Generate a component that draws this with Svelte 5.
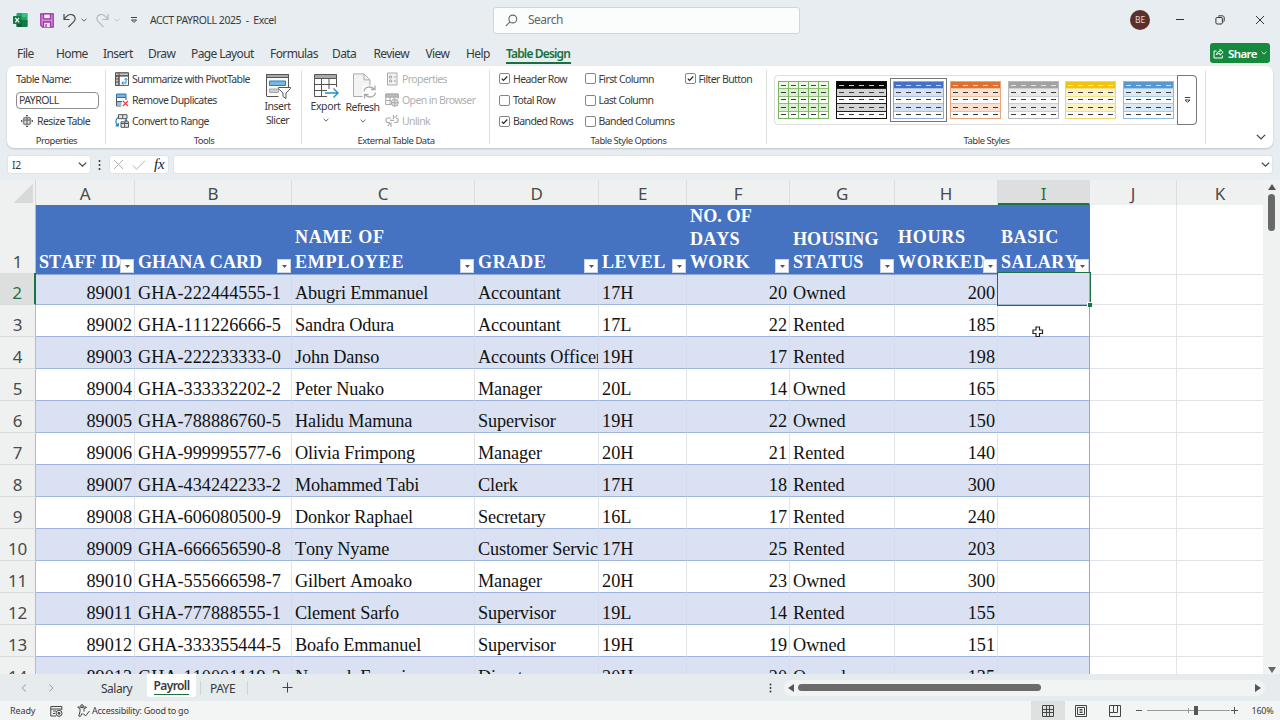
<script>
  const tabs = [
    ['File', 17], ['Home', 56], ['Insert', 103], ['Draw', 148], ['Page Layout', 191],
    ['Formulas', 270], ['Data', 332], ['Review', 373.5], ['View', 425.5], ['Help', 466]
  ];
  const columns = [
    { id: 'A', w: 99, lines: ['STAFF ID'], lh: 24, ls: 0 },
    { id: 'B', w: 157, lines: ['GHANA CARD'], lh: 24, ls: 0 },
    { id: 'C', w: 183, lines: ['NAME OF', 'EMPLOYEE'], lh: 24.5, ls: 0.7 },
    { id: 'D', w: 124, lines: ['GRADE'], lh: 24, ls: 0.6 },
    { id: 'E', w: 88, lines: ['LEVEL'], lh: 24, ls: 0.5 },
    { id: 'F', w: 103, lines: ['NO. OF', 'DAYS', 'WORK'], lh: 23, ls: 0.1 },
    { id: 'G', w: 105, lines: ['HOUSING', 'STATUS'], lh: 23, ls: 0 },
    { id: 'H', w: 103, lines: ['HOURS', 'WORKED'], lh: 24.5, ls: 0.7 },
    { id: 'I', w: 92, lines: ['BASIC', 'SALARY'], lh: 24.5, ls: 0.5 },
    { id: 'J', w: 87 },
    { id: 'K', w: 87 }
  ];
  const template = columns.map((c) => c.w + 'px').join(' ');
  const rows = [
    ['89001', 'GHA-222444555-1', 'Abugri Emmanuel', 'Accountant', '17H', '20', 'Owned', '200'],
    ['89002', 'GHA-111226666-5', 'Sandra Odura', 'Accountant', '17L', '22', 'Rented', '185'],
    ['89003', 'GHA-222233333-0', 'John Danso', 'Accounts Officer', '19H', '17', 'Rented', '198'],
    ['89004', 'GHA-333332202-2', 'Peter Nuako', 'Manager', '20L', '14', 'Owned', '165'],
    ['89005', 'GHA-788886760-5', 'Halidu Mamuna', 'Supervisor', '19H', '22', 'Owned', '150'],
    ['89006', 'GHA-999995577-6', 'Olivia Frimpong', 'Manager', '20H', '21', 'Rented', '140'],
    ['89007', 'GHA-434242233-2', 'Mohammed Tabi', 'Clerk', '17H', '18', 'Rented', '300'],
    ['89008', 'GHA-606080500-9', 'Donkor Raphael', 'Secretary', '16L', '17', 'Rented', '240'],
    ['89009', 'GHA-666656590-8', 'Tony Nyame', 'Customer Service', '17H', '25', 'Rented', '203'],
    ['89010', 'GHA-555666598-7', 'Gilbert Amoako', 'Manager', '20H', '23', 'Owned', '300'],
    ['89011', 'GHA-777888555-1', 'Clement Sarfo', 'Supervisor', '19L', '14', 'Rented', '155'],
    ['89012', 'GHA-333355444-5', 'Boafo Emmanuel', 'Supervisor', '19H', '19', 'Owned', '151'],
    ['89013', 'GHA-110001119-2', 'Nyamah Francis', 'Director', '20H', '20', 'Owned', '135']
  ];
  const options = [
    ['Header Row', true], ['First Column', false], ['Filter Button', true],
    ['Total Row', false], ['Last Column', false], null,
    ['Banded Rows', true], ['Banded Columns', false]
  ];
  const styles = [
    { line: '#8fbf78', head: '#eef8e8', dash: '#444', band: '#dcefd2', edge: '#7bb661', grid: true },
    { line: '#222', head: '#000', dash: '#ccc', band: '#d4d4d4', edge: '#111' },
    { line: '#a9c0e6', head: '#4472c4', dash: '#c4d8ff', band: '#d6e2f4', edge: '#8eaadb', on: true },
    { line: '#f0bfa0', head: '#dd7230', dash: '#ffd5b8', band: '#fbe0d2', edge: '#e8a57c' },
    { line: '#cfcfcf', head: '#a3a3a3', dash: '#e4e4e4', band: '#e9e9e9', edge: '#b9b9b9' },
    { line: '#f5e08a', head: '#f2c40c', dash: '#fff0a8', band: '#fdf2c6', edge: '#efd668' },
    { line: '#a8cbe8', head: '#5598d2', dash: '#c5e3ff', band: '#d9e9f6', edge: '#8fbbe0' }
  ];
</script>

{#snippet chevron(size = 8, color = '#444')}
  <svg class="chev" width={size} height={size} viewBox="0 0 8 8" fill="none" stroke={color} stroke-width="1.1"><path d="M.7 2.3 4 5.5 7.3 2.3" /></svg>
{/snippet}

<div class="app">
  <header class="title">
    <svg class="xl" width="15" height="14" viewBox="0 0 15 14">
      <rect x="3.5" y="0" width="11" height="14" rx="1.2" fill="#21a366" /><path d="M9 0h4.300A1.200 1.200 0 0 1 14.500 1.200V4H9z" fill="#33c481" /><path d="M9 7h5.500v5.800a1.200 1.200 0 0 1-1.200 1.200H9z" fill="#107c41" /><path d="M3.500 7H9v7H4.700a1.200 1.200 0 0 1-1.200-1.200z" fill="#185c37" />
      <rect x="0" y="3" width="8.400" height="8" rx=".8" fill="#107c41" /><path d="m2.300 4.800 3.800 4.500m0-4.500L2.300 9.300" stroke="#fff" stroke-width="1.200" />
    </svg>
    <svg class="save" width="14" height="15" viewBox="0 0 14 15" fill="none" stroke="#9b35a4" stroke-width="1.300"><path d="M.8.900h12.400v13.200H2.600L.8 12.300z" fill="#d98be0" /><path d="M3.500.900h7v5h-7z" fill="#f4ecf5" /><path d="M3.500 14V9h7v5M6 11v3" fill="#f4ecf5" /></svg>
    <svg class="undo" width="14" height="15" viewBox="0 0 14 15" fill="none" stroke="#4a4a4a" stroke-width="1.200"><path d="M1 1v5.500h5.500M1.200 6.300C3.500 2.800 6.500 1 9 1.700c3.500.9 4 4.600 1.800 7L5.500 14" /></svg>
    <span class="c1">{@render chevron(6)}</span>
    <svg class="redo" width="14" height="15" viewBox="0 0 14 15" fill="none" stroke="#b5babd" stroke-width="1.200"><path d="M13 1v5.500H7.500M12.800 6.300C10.500 2.800 7.500 1 5 1.700 1.500 2.600 1 6.300 3.200 8.700L8.500 14" /></svg>
    <span class="c2">{@render chevron(6, '#bbb')}</span>
    <svg class="qat" width="8" height="8" viewBox="0 0 8 8" fill="none" stroke="#444"><path d="M1 1.500h6M1.500 4 4 6.500 6.500 4z" /></svg>
    <span class="doc">ACCT PAYROLL 2025&nbsp; -&nbsp; Excel</span>
    <div class="search">
      <svg width="13" height="13" viewBox="0 0 13 13" fill="none" stroke="#666" stroke-width="1.100"><circle cx="7.800" cy="5" r="3.900" /><path d="M5 7.800.8 12.200" /></svg>
      <span>Search</span>
    </div>
    <div class="avatar">BE</div>
    <div class="winctl">
      <svg width="10" height="10" viewBox="0 0 10 10" stroke="#333"><path d="M1 4.500h8" /></svg>
      <svg width="10" height="10" viewBox="0 0 10 10" stroke="#333" fill="none"><rect x=".9" y="2.500" width="6.500" height="6.500" rx="1.300" /><path d="M3 1.500C3.500.8 4 .8 5 .8h2.200c1.200 0 2 .8 2 2V5c0 1 0 1.500-.8 2" /></svg>
      <svg width="10" height="10" viewBox="0 0 10 10" stroke="#333"><path d="m1 1 8 8M9 1 1 9" /></svg>
    </div>
  </header>

  <nav class="tabs">
    {#each tabs as [name, x], i}
      <span class="tab" style:width="{(i < tabs.length - 1 ? tabs[i + 1][1] : 506) - x}px">{name}</span>
    {/each}
    <span class="tab active">Table Design</span>
    <button class="share">
      <svg width="11" height="11" viewBox="0 0 11 11" fill="none" stroke="#fff"><path d="M3.500 3H1v7h8.300V7.500M3.300 7C3.500 4.500 5 3.500 7 3.500V1.300l3 3-3 2.900V5.400C5.500 5.400 4.300 5.700 3.300 7z" /></svg>
      <span>Share</span>{@render chevron(6, '#fff')}
    </button>
  </nav>

  <section class="ribbon">
    <div class="group props">
      <div class="body">
        <div class="line">Table Name:</div>
        <div class="line"><div class="input">PAYROLL</div></div>
        <div class="line indent">
          <svg width="12" height="12" viewBox="0 0 13 13" fill="none" stroke="#555"><path d="M3 3h7v7H3z" fill="#ddd" /><path d="M3 5.500h7M6.500 3v7M6.500 0v2M6.500 11v2M0 6.500h2M11 6.500h2M5.200 1.300 6.500 0l1.300 1.300M5.200 11.700 6.500 13l1.300-1.300M1.300 5.200 0 6.500l1.300 1.300M11.700 5.200 13 6.500l-1.300 1.300" /></svg>
          Resize Table
        </div>
      </div>
      <div class="label">Properties</div>
    </div>

    <div class="group tools">
      <div class="body cols">
        <div class="stack">
          <div class="line wide">
            <svg width="14" height="14" viewBox="0 0 14 14" fill="none" stroke="#555"><path d="M.5.900h13v12.500H.5z" fill="#fff" /><path d="M.5.900h13v3H.5zM.5 3.900H4v9.500H.5z" fill="#c5c5c5" /><path d="M4 .9v12.500M.5 3.900h13M.5 7H4m-3.500 3H4" /><path d="M7 11h4V6.500M8.300 9.500 6.800 11l1.500 1.600M9.500 7.700 11 6.200l1.500 1.500" stroke="#2183c4" /></svg>
            Summarize with PivotTable
          </div>
          <div class="line">
            <svg width="14" height="14" viewBox="0 0 14 14" fill="none" stroke="#2878b8"><path d="M1.500 1h9.500v3.500H1.500z" fill="#73b5e8" /><path d="M1.500 4.500V13H6M11 4.500V7M1.500 8.500H7" stroke="#555" /><path d="M2 9h4.500v3.500H2z" fill="#8cc4ee" stroke="none" /><path d="m8 8 5 5m0-5-5 5" stroke="#e0444a" stroke-width="1.200" /></svg>
            Remove Duplicates
          </div>
          <div class="line">
            <svg width="14" height="14" viewBox="0 0 14 14" fill="none" stroke="#555"><path d="M3.500.700h8.500v4H3.500zM7.700.700v4" fill="#e5e5e5" /><path d="M6 9.500h7.500v3.800H6zM9.700 8v5.300M6 9.500V7.800h7.500v1.700" fill="#e5e5e5" /><path d="M3 3.500C.3 5.500.2 9 2.700 11.500M.5 11.800h2.800V8.900M11 5v2M9.800 6 11 7.200 12.200 6" stroke="#2183c4" stroke-width="1.200" /></svg>
            Convert to Range
          </div>
        </div>
        <div class="big slicer">
          <svg width="26" height="26" viewBox="0 0 26 26" fill="none" stroke="#555"><path d="M1.500 23V1.500h22V14M1.500 23.500h12" fill="#fafafa" /><path d="M1.500 1.500h22v3h-22z" fill="#a9a9a9" /><path d="M4.500 8h16v4.500h-16z" fill="#73b8ea" stroke="#2b7fbe" /><path d="M4.500 16h9v3.500h-9z" fill="#ccc" stroke="#aaa" /><path d="M13.500 14.500h12v1.200L21 20v5.500l-3-2V20l-4.500-4.300z" fill="#fff" /></svg>
          <span>Insert<br />Slicer</span>
        </div>
      </div>
      <div class="label">Tools</div>
    </div>

    <div class="group ext">
      <div class="body cols">
        <div class="big exp">
          <svg width="26" height="26" viewBox="0 0 26 26" fill="none" stroke="#555"><path d="M1 1h23v23H1z" fill="#fff" stroke="none" /><path d="M1.500 1.500h22v4h-22z" fill="#a9a9a9" /><path d="M23.500 5.500V14M1.500 5.500v18H14M1.500 11.500h22M1.500 17.500H14M8.500 5.500v18M16 5.500V16" /><path d="M12 20h13m-4.500-4.500L25 20l-4.500 4.500" stroke="#2590c8" stroke-width="1.400" /></svg>
          <span>Export</span>{@render chevron(6)}
        </div>
        <div class="big ref">
          <svg width="26" height="26" viewBox="0 0 26 26" fill="none" stroke="#ababab"><path d="M2.500.900h10.500l6 6V23.500H2.500z" fill="#f3f3f3" /><path d="M13 .9v6h6" /><path d="M11.500 12.500h14v13h-14z" fill="#fff" stroke="none" /><path d="M13 18.500c.5-5 7.500-6 10.500-2M24 12.500v4h-4M24.500 19.500c-.5 5-7.500 6-10.500 2M13.500 25.500v-4h4" stroke-width="1.300" /></svg>
          <span>Refresh</span>{@render chevron(6)}
        </div>
        <div class="stack off">
          <div class="line"><svg width="14" height="14" viewBox="0 0 14 14" fill="none" stroke="#aaa"><path d="M2.500 1h9.500v12H2.500z" fill="#f3f3f3" /><path d="M4.500 4h2v2h-2zM4.500 8h2v2h-2zM8.500 5H11M8.500 9H11" /></svg>Properties</div>
          <div class="line"><svg width="14" height="14" viewBox="0 0 14 14" fill="none" stroke="#aaa"><path d="M.7 1h12.500v5M.7 1v10.500H6M.7 4h12.500M.7 7.500H6M5 4v7.500M9 4v2" /><path d="M.7 1h12.500v3H.7z" fill="#bbb" /><circle cx="9.800" cy="9.700" r="3.600" fill="#ddd" /><path d="M6.200 9.700h7.200M9.800 6v7.300" /></svg>Open in Browser</div>
          <div class="line"><svg width="14" height="14" viewBox="0 0 14 14" fill="none" stroke="#aaa" stroke-width="1.200"><path d="M6 4H3C.3 4 .2 8.500 3 8.500h2M8 4.500 9.500 3M9 8.500h1.500c3.500 0 3.500-4.500.5-4.500M5 8.500 3 12m3-3.500V13M8.500 1v2.500M12 1 10.500 3.500M5 6.300h4" /></svg>Unlink</div>
        </div>
      </div>
      <div class="label">External Table Data</div>
    </div>

    <div class="group opts">
      <div class="body checks">
        {#each options as o}
          <div class="line">
            {#if o}
              <i class="box">{#if o[1]}<svg width="7" height="7" viewBox="0 0 7 7" fill="none" stroke="#222" stroke-width="1.100"><path d="m.8 3.700 1.700 1.800L6.300 1.500" /></svg>{/if}</i>{o[0]}
            {/if}
          </div>
        {/each}
      </div>
      <div class="label">Table Style Options</div>
    </div>

    <div class="group gallery">
      <div class="body">
        <div class="strip">
          {#each styles as s}
            <div class="cell" class:on={s.on}>
              <svg width="51" height="38" viewBox="0 0 51 38">
                <rect width="51" height="38" fill="#fff" />
                <rect width="51" height="8" fill={s.head} />
                <rect y="8" width="51" height="7.300" fill={s.band} /><rect y="22.500" width="51" height="7.500" fill={s.band} />
                {#each [7.5, 15.5, 22.5, 30.5] as y}<path d="M0 {y}H51" stroke={s.line} stroke-width="1" />{/each}
                {#if s.grid}<path d="M10.500 0v38M20.500 0v38M30.500 0v38M40.500 0v38" stroke={s.edge} />{/if}
                {#each [4.5, 11.5, 18.500, 26.5, 33.500] as y, i}<path d="M3 {y}h5m5 0h5m5 0h5m5 0h5m5 0h5" stroke={i ? '#3b3b3b' : s.dash} stroke-width="1.200" />{/each}
                <rect x=".5" y=".5" width="50" height="37" fill="none" stroke={s.edge} />
              </svg>
            </div>
          {/each}
          <div class="more"><svg width="7" height="8" viewBox="0 0 7 8" fill="none" stroke="#444"><path d="M.8 1.500h5.400M1 4l2.500 2.300L6 4z" /></svg></div>
        </div>
      </div>
      <div class="label">Table Styles</div>
    </div>
    <div class="collapse">{@render chevron(10)}</div>
  </section>

  <section class="formula">
    <div class="namebox"><span>I2</span>{@render chevron(9)}</div>
    <svg class="dots" width="3" height="12" viewBox="0 0 3 12" fill="#333"><circle cx="1.500" cy="2" r="1" /><circle cx="1.500" cy="6" r="1" /><circle cx="1.500" cy="10" r="1" /></svg>
    <div class="fx">
      <svg width="11" height="11" viewBox="0 0 11 11" stroke="#b4b4b4"><path d="m1 1 9 9M10 1l-9 9" /></svg>
      <svg width="14" height="10" viewBox="0 0 14 10" stroke="#b4b4b4" fill="none"><path d="m.8 5.500 3.800 3.700L13 .8" /></svg>
      <span>fx</span>
    </div>
    <div class="finput">{@render chevron(9)}</div>
  </section>

  <main>
    <div class="sheet">
      <div class="rowline colhead" style:grid-template-columns="36px {template}">
        <div class="corner"></div>
        {#each columns as c}<div class="ch" class:sel={c.id === 'I'}>{c.id}</div>{/each}
      </div>
      <div class="rowline first" style:grid-template-columns="36px {template}">
        <div class="rh">1</div>
        {#each columns as c}
          {#if c.lines}
            <div class="th" style:line-height="{c.lh}px" style:letter-spacing="{c.ls}px">
              <div>{#each c.lines as l}<p>{l}</p>{/each}</div>
              <i class="filter"><svg width="5" height="3" viewBox="0 0 5 3"><path d="M0 0h5L2.500 3z" fill="#555" /></svg></i>
            </div>
          {:else}<div class="blank"></div>{/if}
        {/each}
      </div>
      {#each rows as r, n}
        <div class="rowline data" class:band={n % 2 === 0} style:grid-template-columns="36px {template}">
          <div class="rh" class:sel={n === 0}>{n + 2}</div>
          {#each columns as c, k}
            <div class="td" class:intable={k < 9} class:last={k === 8} class:name={k === 2} class:grade={k === 3} class:num={k === 0 || k === 5 || k === 7} class:cursor={n === 0 && k === 8}>{#if r[k]}<span>{r[k]}</span>{/if}</div>
          {/each}
        </div>
      {/each}
    </div>
    <div class="vscroll">
      <svg width="8" height="6" viewBox="0 0 8 6"><path d="M4 0 8 6H0z" fill="#555" /></svg>
      <i></i>
      <svg class="down" width="8" height="6" viewBox="0 0 8 6"><path d="M4 6 8 0H0z" fill="#666" /></svg>
    </div>
    <svg class="pointer" width="12" height="12" viewBox="0 0 12 12" fill="#fff" stroke="#222" stroke-width="1.200"><path d="M4 1h3.500v3h3v3.500h-3v3H4v-3H1V4h3z" /></svg>
  </main>

  <footer class="sheets">
    <svg class="pv" width="6" height="8" viewBox="0 0 6 8" fill="none" stroke="#999"><path d="M4.800.500 1 4l3.800 3.500" /></svg>
    <svg class="nx" width="6" height="8" viewBox="0 0 6 8" fill="none" stroke="#999"><path d="M1.200.500 5 4 1.200 7.500" /></svg>
    <span class="st salary">Salary</span>
    <span class="st current"><b>Payroll</b></span>
    <span class="st paye">PAYE</span>
    <svg class="plus" width="11" height="11" viewBox="0 0 11 11" stroke="#444"><path d="M5.500.500v10M.5 5.500h10" /></svg>
    <svg class="hd" width="3" height="10" viewBox="0 0 3 10" fill="#333"><circle cx="1.500" cy="1.500" r=".9" /><circle cx="1.500" cy="5" r=".9" /><circle cx="1.500" cy="8.500" r=".9" /></svg>
    <div class="hscroll">
      <svg width="6" height="8" viewBox="0 0 6 8"><path d="M0 4 6 0v8z" fill="#555" /></svg><i></i>
      <svg class="r" width="6" height="8" viewBox="0 0 6 8"><path d="M6 4 0 0v8z" fill="#555" /></svg>
    </div>
  </footer>

  <footer class="status">
    <span class="ready">Ready</span>
    <svg class="mac" width="13" height="12" viewBox="0 0 13 12" fill="none" stroke="#444"><path d="M6 11H.8V1.500h11V5M.8 4h11M3 6h3M3 8.500h2" /><circle cx="9" cy="8.300" r="3" /><circle cx="9" cy="8.300" r="1" fill="#444" /></svg>
    <svg class="acc" width="13" height="13" viewBox="0 0 13 13" fill="none" stroke="#444"><circle cx="5" cy="2" r="1.300" /><path d="M.8 3.500 3 4.500v3L1.800 12l1.500.5L5 9.500l1 1M9.500 3.500 7 4.500v3M.8 3.500C.8 2.500 2 2.700 5 3.800 8 2.700 9.500 2.500 9.500 3.500M6.500 9.700l2 2.300 4-5" /></svg>
    <span class="access">Accessibility: Good to go</span>
    <div class="views">
      <div class="v on"><svg width="12" height="12" viewBox="0 0 12 12" fill="none" stroke="#444"><path d="M.5.500h11v11H.5zM.5 4.500h11M.5 7.500h11M4.500.500v11M7.500.500v11" /></svg></div>
      <div class="v"><svg width="12" height="12" viewBox="0 0 12 12" fill="none" stroke="#444"><path d="M.5.500h11v11H.5zM2.500 2.500h7v7h-7zM4.500 4.500h3M4.500 6h3M4.500 7.500h3" /></svg></div>
      <div class="v"><svg width="12" height="12" viewBox="0 0 12 12" fill="none" stroke="#444"><path d="M.5.500h11v11H.5zM4.500.500v7h4v-7M.5 7.500h4" /></svg></div>
    </div>
    <svg class="zoomer" width="102" height="11" viewBox="0 0 102 11" stroke="#555"><path d="M0 5.500h6M95 5.500h7M98.500 2v7" /><path d="M11 5.500h83M52.500 3v5" stroke="#999" /><rect x="58.500" y="1.500" width="3" height="8" fill="#555" /></svg>
    <span class="pct">160%</span>
  </footer>
</div>

<style>
  :global(body) { margin: 0; overflow: hidden; }
  .app { width: 1280px; height: 720px; display: flex; flex-direction: column; background: #e7edf0; color: #3a3a3a; font: 10.500px/14px "Noto Sans", "Open Sans", sans-serif; letter-spacing: -.25px; overflow: hidden; }
  .app * { box-sizing: border-box; }
  svg { display: block; flex: none; }
  i { font-style: normal; }
  p { margin: 0; }

  .title { height: 40px; display: flex; align-items: center; padding-left: 13px; flex: none; }
  .save { margin-left: 12px; }
  .undo { margin-left: 9px; }
  .c1 { margin-left: 4px; }
  .redo { margin-left: 8px; }
  .c2 { margin-left: 5px; }
  .qat { margin-left: 10px; }
  .doc { margin-left: 12px; width: 343px; white-space: nowrap; letter-spacing: -.43px; }
  .search { width: 307px; height: 27px; background: #fbfcfc; border: 1px solid #cfd5d8; border-radius: 3px; display: flex; align-items: center; gap: 10px; padding-left: 11px; font-size: 12px; letter-spacing: -.5px; color: #666; }
  .avatar { margin-left: 330px; width: 20px; height: 20px; border-radius: 50%; background: #5b2f2a; color: #e5d8d6; display: grid; place-items: center; font-size: 8.500px; }
  .winctl { margin-left: 25px; display: flex; gap: 30px; }

  .tabs { height: 26px; display: flex; align-items: center; padding: 1px 0 0 17px; flex: none; font-size: 12px; letter-spacing: -.6px; }
  .tab { white-space: nowrap; flex: none; }
  .tab.active { width: 64.500px; color: #18713c; font-weight: 600; letter-spacing: -.85px; height: 18px; line-height: 16px; border-bottom: 2px solid #18713c; margin-top: 2px; }
  .share { margin: -1px 0 0 639.500px; width: 60px; height: 20px; border: 0; border-radius: 3px; background: #17893f; color: #fff; font: 600 11.500px "Noto Sans", sans-serif; letter-spacing: -.6px; padding: 0 3px; display: flex; align-items: center; gap: 4px; }

  .ribbon { height: 82px; margin: 0 7px; background: #fff; border-radius: 7px; box-shadow: 0 1px 2px #bcc4c8; display: flex; flex: none; position: relative; letter-spacing: -.55px; }
  .group { display: flex; flex-direction: column; position: relative; padding-top: 2px; flex: none; }
  .group::after { content: ""; position: absolute; right: 0; top: 4px; height: 74px; width: 1px; background: #dedede; }
  .body { height: 66px; flex: none; }
  .cols { display: flex; }
  .line { height: 21.400px; display: flex; align-items: center; white-space: nowrap; gap: 3px; }
  .line.wide { letter-spacing: -.6px; }
  .label { text-align: center; font-size: 9.500px; line-height: 13px; letter-spacing: -.48px; }
  .props { width: 99px; }
  .props .line { padding-left: 9px; }
  .props .indent { padding-left: 14px; gap: 4px; }
  .input { width: 83px; height: 17px; border: 1px solid #8c8c8c; border-radius: 4px; padding-left: 2px; line-height: 15px; }
  .tools { width: 196px; }
  .tools .stack { width: 148px; flex: none; padding-left: 9px; }
  .big { display: flex; flex-direction: column; align-items: center; text-align: center; flex: none; }
  .big svg:first-child { margin-top: 5px; }
  .slicer { width: 47px; }
  .slicer span { line-height: 13.500px; margin-top: 1px; }
  .ext { width: 188px; }
  .exp { width: 47px; letter-spacing: -.4px; }
  .ref { width: 27px; }
  .ref span { margin-top: 1px; }
  .big :global(.chev) { margin-top: 4px; }
  .ref svg:first-child { margin-left: 2px; }
  .off { color: #b0b0b0; padding-left: 9px; }
  .off .line { letter-spacing: -.6px; }
  .opts { width: 277px; }
  .checks { display: grid; grid-template-columns: 85.500px 100px 80px; grid-auto-rows: 21.400px; padding-left: 9px; }
  .checks .line { gap: 3px; letter-spacing: -.6px; }
  .box { width: 11px; height: 11px; border: 1px solid #858585; border-radius: 2px; display: grid; place-items: center; }
  .gallery { width: 439px; }
  .strip { margin: 7px 0 0 7px; width: 423px; height: 50px; border: 1px solid #ddd; border-radius: 4px; display: flex; align-items: center; }
  .cell { width: 57.400px; height: 44px; display: grid; place-items: center; flex: none; }
  .cell.on { border: 1.500px solid #777; }
  .more { margin-left: auto; margin-right: -1px; height: 50px; width: 20px; border: 1px solid #777; border-radius: 0 4px 4px 0; display: grid; place-items: center; flex: none; }
  .collapse { margin: auto 7px 6px auto; }

  .formula { height: 32px; flex: none; display: flex; align-items: center; padding: 3px 7px 2px; }
  .namebox, .fx, .finput { height: 19px; background: #fff; border-radius: 3px; display: flex; align-items: center; border: 1px solid #dfe4e6; }
  .namebox { width: 84px; justify-content: space-between; padding: 0 3px 0 4px; }
  .dots { margin: 0 8px 0 7px; }
  .fx { width: 60px; padding-left: 3px; gap: 8px; }
  .fx span { font: italic 15px "Liberation Serif", serif; color: #222; }
  .finput { margin-left: 4px; width: 1100px; justify-content: flex-end; padding-right: 2px; }

  main { height: 494px; display: flex; flex: none; position: relative; overflow: hidden; }
  .sheet { width: 1263px; height: 494px; overflow: hidden; background: #fff; }
  .rowline { display: grid; }
  .colhead { height: 25px; background: #eff1f1; }
  .ch { text-align: center; font-size: 17px; line-height: 28px; height: 25px; border-right: 1px solid #dcdfe0; color: #4a4a4a; }
  .ch.sel { background: #dcdfde; color: #1c7443; border-bottom: 2px solid #1c7443; }
  .corner { border-right: 1px solid #d5d8d9; background: linear-gradient(135deg, transparent 50%, #d8dada 50%) 13px 3px / 20px 20px no-repeat; }
  .first { height: 68px; }
  .rh { background: #eff1f1; border-right: 1px solid #b8bcbe; border-bottom: 1px solid #d9dcdd; font-size: 17px; line-height: 23px; color: #4a4a4a; display: flex; align-items: flex-end; justify-content: center; letter-spacing: -.3px; }
  .first .rh { line-height: 25px; }
  .rh.sel { background: #dcdfde; color: #1c7443; border-right: 2px solid #1c7443; }
  .blank { border-bottom: 1px solid #e1e4e6; border-right: 1px solid #e1e4e6; }
  .th { background: #4672c2; color: #fff; font: bold 18.100px "Liberation Serif", serif; padding-left: 3px; display: flex; align-items: flex-end; position: relative; white-space: nowrap; font-kerning: none; border-bottom: 1px solid #8ea9db; }
  .th > div { width: 100%; overflow: hidden; }
  .filter { position: absolute; right: 1px; bottom: 1px; width: 14px; height: 14px; background: #fff; border: 1px solid #cdd5e0; display: grid; place-items: center; }
  .data { height: 32px; }
  .td { border-right: 1px solid #e1e4e6; border-bottom: 1px solid #e1e4e6; padding: 0 2px 0 3px; overflow: hidden; white-space: nowrap; font: 18.250px/41px "Liberation Serif", serif; height: 32px; letter-spacing: 0; color: #111; font-kerning: none; }
  .td.name { letter-spacing: -.15px; }
  .td.grade { letter-spacing: -.15px; padding-right: 0; }
  .td.intable { border-bottom-color: #9fb5dd; }
  .td.num { text-align: right; }
  .band .td.intable { background: #d9e1f2; border-right-color: #d3dbec; }
  .td.last, .band .td.last { border-right-color: #8ea9db; }
  .cursor { outline: 1.500px solid #1f7246; position: relative; overflow: visible; }
  .cursor::after { content: ""; position: absolute; right: -3px; bottom: -3px; width: 4px; height: 4px; background: #1f7246; border: solid #fff; border-width: 1px 0 0 1px; }
  .vscroll { width: 17px; background: #f0f2f2; display: flex; flex-direction: column; align-items: center; padding: 4px 0 1px; }
  .vscroll i { width: 7px; height: 37px; border-radius: 4px; background: #686868; margin-top: 4px; }
  .down { margin-top: auto; }
  .pointer { position: absolute; left: 1032px; top: 146px; }

  .sheets { height: 27px; flex: none; display: flex; align-items: center; padding-left: 21px; font-size: 12px; letter-spacing: -.5px; background: #e6ecee; }
  .nx { margin-left: 21px; }
  .st { height: 22px; line-height: 23px; }
  .salary { margin-left: 47px; width: 46px; }
  .current { width: 49px; height: 23px; background: #fff; margin-top: -4px; text-align: center; border-radius: 0 0 3px 3px; }
  .current b { display: inline-block; font-weight: 600; height: 21px; border-bottom: 1px solid #17713c; letter-spacing: -.6px; }
  .paye { margin-left: 4px; padding-left: 9px; width: 48px; height: 14px; line-height: 15px; border: solid #cfd5d7; border-width: 0 1px; }
  .plus { margin-left: 34px; }
  .hd { margin-left: 476px; }
  .hscroll { margin-left: 12px; width: 481px; height: 16px; border-radius: 8px; background: #f2f4f4; display: flex; align-items: center; padding: 0 4px; gap: 4px; }
  .hscroll i { width: 243px; height: 7px; border-radius: 4px; background: #6b6b6b; }
  .r { margin-left: auto; }

  .status { height: 19px; flex: none; background: #f3f4f4; display: flex; align-items: center; padding-left: 10px; font-size: 9px; letter-spacing: -.25px; }
  .ready { width: 40px; letter-spacing: -.1px; }
  .acc { margin-left: 14px; }
  .access { margin-left: 2px; width: 939px; white-space: nowrap; flex: none; }
  .views { display: flex; }
  .v { width: 33.500px; height: 19px; display: grid; place-items: center; }
  .v.on { background: #dfe1e1; }
  .zoomer { margin-left: 4px; }
  .pct { margin-left: 14px; }
</style>
